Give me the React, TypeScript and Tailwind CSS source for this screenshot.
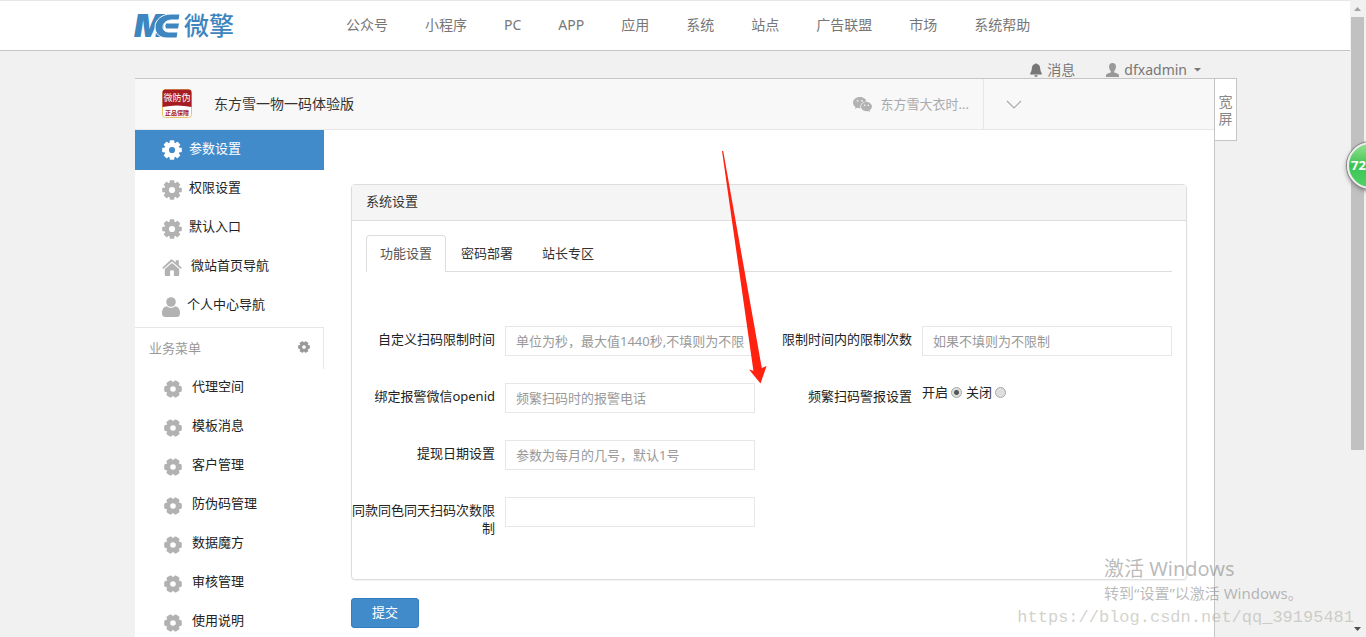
import clsx from "clsx";
import type { ReactNode } from "react";

const nav = ["公众号", "小程序", "PC", "APP", "应用", "系统", "站点", "广告联盟", "市场", "系统帮助"];
const business = ["代理空间", "模板消息", "客户管理", "防伪码管理", "数据魔方", "审核管理", "使用说明"];

const settings = [
  { label: "参数设置", icon: <Gear teeth={8} size={20} /> },
  { label: "权限设置", icon: <Gear teeth={8} size={20} /> },
  { label: "默认入口", icon: <Gear teeth={8} size={20} /> },
  { label: "微站首页导航", icon: <HomeIcon /> },
  { label: "个人中心导航", icon: <PersonIcon /> },
];

function Gear({ teeth, size }: { teeth: 6 | 8; size: number }) {
  const width = teeth === 8 ? 4.6 : 7;
  const start = teeth === 8 ? 0 : 30;
  return (
    <svg width={size} height={size} viewBox="0 0 20 20" className="shrink-0">
      <circle cx="10" cy="10" r="5.4" fill="none" stroke="currentColor" strokeWidth="4.6" />
      {Array.from({ length: teeth }, (_, i) => (
        <rect
          key={i}
          x={10 - width / 2}
          y="0.2"
          width={width}
          height="4.8"
          rx={teeth === 8 ? 0.8 : 2.2}
          fill="currentColor"
          transform={`rotate(${start + (i * 360) / teeth} 10 10)`}
        />
      ))}
    </svg>
  );
}

function HomeIcon() {
  return (
    <svg width="20" height="17" viewBox="0 0 20 17" fill="currentColor" className="mr-0.5 shrink-0">
      <path d="M10 0.4 13.8 3.6V1.2H16.8V6.1L19.8 8.7 18.8 9.9 10 2.6 1.2 9.9 0.2 8.7 9 0.6Q9.5 0.1 10 0.4Z" />
      <path d="M10 4 17.2 10V16Q17.2 17 16.2 17H11.9V11.6H8.1V17H3.8Q2.8 17 2.8 16V10Z" />
    </svg>
  );
}

function PersonIcon() {
  return (
    <svg width="18" height="20" viewBox="0 0 18 20" fill="currentColor" className="shrink-0">
      <circle cx="9" cy="5" r="4.8" />
      <path d="M4.6 9.3Q9 12.6 13.4 9.3Q18 10 18 16.5Q18 20 14.4 20H3.6Q0 20 0 16.5Q0 10 4.6 9.3Z" />
    </svg>
  );
}

function BellIcon() {
  return (
    <svg width="12" height="14" viewBox="0 0 12 14" fill="currentColor" className="shrink-0">
      <path d="M5 1Q6-0.6 7 1Q10 1.9 10.2 5.5Q10.3 8.6 11.8 10.4V11.6H0.2V10.4Q1.7 8.6 1.8 5.5Q2 1.9 5 1ZM4.2 12.2H7.8Q7.4 14 6 14Q4.6 14 4.2 12.2Z" />
    </svg>
  );
}

function UserIcon() {
  return (
    <svg width="13" height="14" viewBox="0 0 13 14" fill="currentColor" className="shrink-0 text-[#999]">
      <path d="M6.5 0Q10 0 10 3.8Q10 6.6 8.2 8.2V9.6Q12.6 10.8 13 12V14H0V12Q0.4 10.8 4.8 9.6V8.2Q3 6.6 3 3.8Q3 0 6.5 0Z" />
    </svg>
  );
}

function WechatIcon() {
  return (
    <svg width="19" height="15" viewBox="0 0 19 15" className="shrink-0">
      <path fill="#b2b2b2" d="M6.8 0C3 0 0 2.5 0 5.7c0 1.8 1 3.3 2.6 4.3L2 12l2.400-1.200c.8.2 1.5.4 2.4.4h.7C6.6 7.5 9.5 4.4 13.5 4.4 12.9 1.8 10.1 0 6.8 0Z" />
      <path fill="#b2b2b2" d="M19 9.6c0-2.6-2.6-4.7-5.5-4.7-3.1 0-5.5 2.1-5.5 4.7s2.4 4.7 5.5 4.7c.7 0 1.3-.2 1.900-.3l1.8 1-.5-1.700c1.300-1 2.300-2.200 2.300-3.700Z" />
      <g fill="#f8f8f8">
        <circle cx="4.6" cy="3.8" r="0.9" />
        <circle cx="9" cy="3.8" r="0.9" />
        <circle cx="11.7" cy="8.2" r="0.8" />
        <circle cx="15.3" cy="8.2" r="0.8" />
      </g>
    </svg>
  );
}

function Logo() {
  return (
    <a href="#" aria-label="微擎" className="flex h-full w-[101px] items-center text-[#3d86c0]">
      <svg width="101" height="28" viewBox="0 0 101 28" fill="currentColor" className="overflow-visible">
        <text x="-1" y="25" fontSize="32" fontWeight="900" fontStyle="italic" fontFamily="Inter, sans-serif">
          M
        </text>
        <path stroke="#fff" strokeWidth="1" d="M45 2H36C27 2 20 8 20 15C20 22 25 26 32 26H42L43 20H34C30 20 28 18 28 15C28 11 32 8 37 8H44Z" />
        <path d="M31 11.5H44L43 16.5H31Q29.5 14 31 11.5Z" />
        <text x="49" y="23" fontSize="25" fontWeight="500" fontFamily="'Noto Sans CJK SC', sans-serif">
          微擎
        </text>
      </svg>
    </a>
  );
}

function AppBadge() {
  return (
    <svg width="30" height="30" viewBox="0 0 30 30" className="shrink-0">
      <rect x="0.5" y="0.5" width="29" height="28" rx="3" fill="#fff" stroke="#e9c46a" />
      <path d="M0.5 18V3.5Q0.5 0.5 3.5 0.5H26.5Q29.5 0.5 29.5 3.5V18Q15 15 0.5 18Z" fill="#a51d22" />
      <g fontFamily="'Noto Sans CJK SC', sans-serif" textAnchor="middle">
        <text x="15" y="12" fontSize="9" fill="#fff">微防伪</text>
        <text x="15" y="26" fontSize="6" fontWeight="700" fill="#a51d22">正品保障</text>
      </g>
    </svg>
  );
}

function Header() {
  return (
    <header className="h-[51px] shrink-0 border-t border-b border-t-[#e7e7e7] border-b-[#c5c5c5] bg-white">
      <div className="mx-auto flex h-full w-full max-w-[1080px] items-center">
        <Logo />
        <nav className="ml-[110px] flex gap-[37px] pb-0.5 text-sm whitespace-nowrap text-[#777]">
          {nav.map(item => (
            <a key={item} href="#">{item}</a>
          ))}
        </nav>
      </div>
    </header>
  );
}

function UserBar() {
  return (
    <div className="flex h-[27px] shrink-0 items-end justify-end gap-[31px] pr-3.5 text-sm leading-4 text-[#777]">
      <a href="#" className="flex items-center gap-[5px]">
        <BellIcon />
        消息
      </a>
      <button className="flex items-center gap-[5px]">
        <UserIcon />
        dfxadmin
        <svg width="7" height="4" viewBox="0 0 7 4" fill="currentColor" className="ml-0.5">
          <path d="M0 0H7L3.5 3.5Z" />
        </svg>
      </button>
    </div>
  );
}

function TitleBar() {
  return (
    <div className="flex h-[52px] items-center border-y border-t-[#c5c5c5] border-b-[#e7e7e7] bg-[#f8f8f8] pl-[27px] text-sm">
      <AppBadge />
      <h1 className="ml-[22px] grow text-[#333]">东方雪一物一码体验版</h1>
      <a href="#" className="flex items-center gap-[9px] pr-3.5 text-[13px] text-[#aaa]">
        <WechatIcon />
        东方雪大衣时...
      </a>
      <button aria-label="展开" className="h-full w-[231px] border-l border-[#e7e7e7] pl-[22px]">
        <svg width="16" height="9" viewBox="0 0 16 9" fill="none" stroke="#aaa" strokeWidth="1.2">
          <path d="M1 1 8 8 15 1" />
        </svg>
      </button>
    </div>
  );
}

function SideLink({ icon, children, active, nested }: { icon: ReactNode; children: string; active?: boolean; nested?: boolean }) {
  return (
    <a
      href="#"
      className={clsx(
        "flex items-center",
        active ? "h-10 bg-[#428bca] text-white" : "h-[39px] text-[#222]",
        nested ? "gap-2.5 pl-[29px]" : "gap-[7px] pl-[27px]",
      )}
    >
      <span className={active ? "text-white" : "text-[#b2b2b2]"}>{icon}</span>
      <span className="pb-[3px]">{children}</span>
    </a>
  );
}

function Sidebar() {
  return (
    <aside className="w-[189px] shrink-0 text-[13px]">
      {settings.map((item, i) => (
        <SideLink key={item.label} icon={item.icon} active={i === 0}>
          {item.label}
        </SideLink>
      ))}
      <div className="mt-px flex h-[42px] items-center justify-between border-t border-r border-[#e7e7e7] pr-[13px] pl-3.5 text-[#999]">
        业务菜单
        <button aria-label="设置" className="pb-1">
          <Gear teeth={6} size={12} />
        </button>
      </div>
      {business.map(label => (
        <SideLink key={label} icon={<Gear teeth={6} size={18} />} nested>
          {label}
        </SideLink>
      ))}
    </aside>
  );
}

function Field({ id, label, placeholder }: { id: string; label: string; placeholder?: string }) {
  return (
    <>
      <label htmlFor={id} className="pt-1 text-right">{label}</label>
      <input
        id={id}
        type="text"
        placeholder={placeholder}
        className="h-[30px] w-full min-w-0 border border-[#e7e7eb] bg-white px-2.5 placeholder:text-[#999]"
      />
    </>
  );
}

function Radio({ label, checked }: { label: string; checked?: boolean }) {
  return (
    <label className="flex items-center gap-[3px]">
      {label}
      <input
        type="radio"
        name="alarm"
        defaultChecked={checked}
        className="size-[11px] appearance-none rounded-full border border-[#a9a9a9] bg-[#dedede] checked:bg-[radial-gradient(circle,#555_2px,#dedede_3px)]"
      />
    </label>
  );
}

function SettingsForm() {
  return (
    <form className="grow px-[27px] pt-[54px] text-[13px] leading-[18px] text-[#333]">
      <section className="rounded border border-[#ddd] bg-white pb-9 shadow-xs">
        <h2 className="h-9 border-b border-[#ddd] bg-[#f5f5f5] px-3.5 py-[7px]">系统设置</h2>
        <div className="mx-3.5 mt-3.5 flex h-[37px] border-b border-[#ddd]">
          <button type="button" className="-mb-px rounded-t border border-b-0 border-[#ddd] bg-white px-[13px] pb-0.5 text-[#555]">功能设置</button>
          <button type="button" className="ml-px px-3.5">密码部署</button>
          <button type="button" className="ml-px px-3.5">站长专区</button>
        </div>
        <div className="mt-[54px] mr-3.5 grid grid-cols-[143px_1fr_147px_1fr] items-start gap-x-2.5 gap-y-[27px] text-[#222]">
          <Field id="scan-time" label="自定义扫码限制时间" placeholder="单位为秒，最大值1440秒,不填则为不限制" />
          <Field id="scan-count" label="限制时间内的限制次数" placeholder="如果不填则为不限制" />
          <Field id="openid" label="绑定报警微信openid" placeholder="频繁扫码时的报警电话" />
          <span id="alarm-label" className="pt-1 text-right">频繁扫码警报设置</span>
          <div role="radiogroup" aria-labelledby="alarm-label" className="flex gap-1">
            <Radio label="开启" checked />
            <Radio label="关闭" />
          </div>
          <Field id="cash-date" label="提现日期设置" placeholder="参数为每月的几号，默认1号" />
          <div className="col-span-2" />
          <Field id="same-limit" label="同款同色同天扫码次数限制" />
        </div>
        <div className="h-1.5" />
      </section>
      <button type="submit" className="mt-[18px] h-[30px] w-[68px] rounded-[3px] border border-[#357ebd] bg-[#428bca] pb-0.5 text-white">
        提交
      </button>
    </form>
  );
}

function Scrollbar() {
  return (
    <div className="flex w-4 shrink-0 flex-col bg-[#f1f1f1] pl-px">
      <svg width="13" height="17" viewBox="0 0 13 17" fill="#a3a3a3">
        <path d="M3 11H10L6.5 7Z" />
      </svg>
      <div className="h-[433px] w-[13px] bg-[#c1c1c1]" />
      <svg width="13" height="17" viewBox="0 0 13 17" fill="#505050" className="mt-auto">
        <path d="M3 7H10L6.5 11Z" />
      </svg>
    </div>
  );
}

function Overlays() {
  return (
    <div className="pointer-events-none absolute inset-0 overflow-hidden">
      <svg width="45" height="233" viewBox="0 0 45 233" fill="#ff2211" className="absolute top-[151px] left-[722px]">
        <path d="M0 0H1.2L39.8 217 44.6 215 38.5 232.5 27 218.5 31.4 219.7Z" />
      </svg>
      <div className="absolute top-[142px] -right-[28px] flex size-[47px] items-center rounded-full border-2 border-[#eee] bg-linear-to-b from-[#8fe08f] via-[#3cc452] to-[#4fd168] pl-0.5 text-[13px] font-bold text-white shadow-[0_2px_5px_#777] ring-1 ring-[#888]">
        72
      </div>
      <div className="absolute right-[66px] bottom-8 w-[196px] whitespace-nowrap text-[#808080]/55">
        <p className="text-xl leading-6">激活 Windows</p>
        <p className="text-[15px] leading-6">转到“设置”以激活 Windows。</p>
      </div>
      <p className="absolute right-3 bottom-[7px] font-['Liberation_Mono',monospace] text-[17px] leading-6 text-[#b4b4aa]/60">
        https://blog.csdn.net/qq_39195481
      </p>
    </div>
  );
}

export default function App() {
  return (
    <div className="relative flex h-screen overflow-hidden bg-[#f1f1f1] font-['Noto_Sans','Noto_Sans_CJK_SC',sans-serif]">
      <div className="flex min-w-0 grow flex-col">
        <Header />
        <main className="mx-auto flex w-full max-w-[1080px] grow flex-col">
          <UserBar />
          <div className="relative grow border-r border-[#c5c5c5] bg-white">
            <TitleBar />
            <div className="flex">
              <Sidebar />
              <SettingsForm />
            </div>
            <button className="absolute top-0 left-full h-[63px] w-[23px] border border-[#c5c5c5] bg-white px-[3px] text-sm leading-[17px] text-[#888]">
              宽屏
            </button>
          </div>
        </main>
      </div>
      <Scrollbar />
      <Overlays />
    </div>
  );
}
